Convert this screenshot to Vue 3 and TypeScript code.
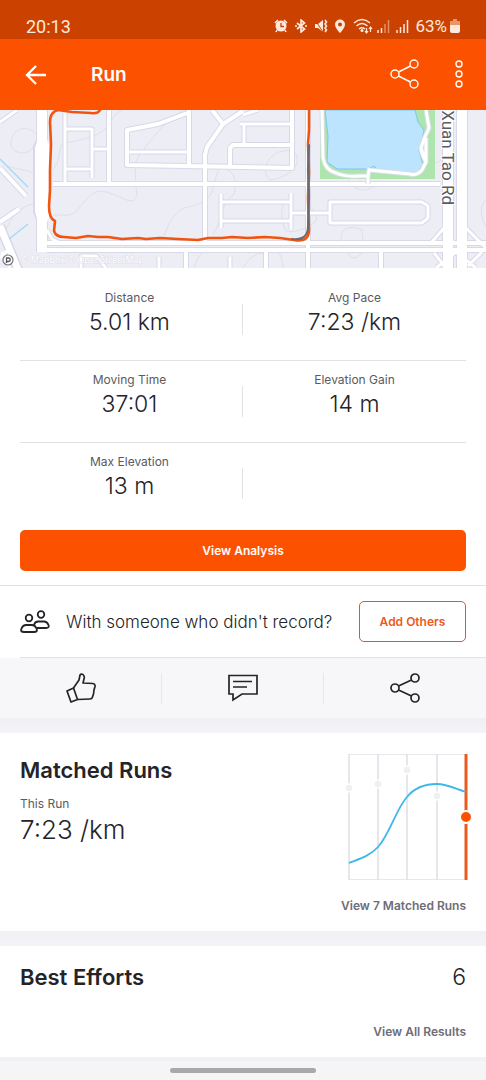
<script setup lang="ts">
interface Stat {
  label: string
  value: string
}

const statRows: Stat[][] = [
  [
    { label: 'Distance', value: '5.01 km' },
    { label: 'Avg Pace', value: '7:23 /km' },
  ],
  [
    { label: 'Moving Time', value: '37:01' },
    { label: 'Elevation Gain', value: '14 m' },
  ],
  [{ label: 'Max Elevation', value: '13 m' }],
]

// Map streets, grouped by drawn width
const minorRoads: string[] = [
  'M65 0V72', 'M65 19H92V68', 'M92 39H109', 'M65 59H92',
  'M127 42H189', 'M221 84V118', 'M221 92H290', 'M221 111H290', 'M291 83V119', 'M291 103H330',
  'M330 92H422L428 96V108L422 113H330Z',
  'M244 14V33', 'M240 14H290', 'M0 12L17 0', 'M243 5L258 0',
  'M159 147V158', 'M230 147V158', 'M81 158V146H96L106 158',
  'M430 134L444 118L454 134M436 158L456 142L476 158M434 143L446 158M466 118L486 138M468 156L482 142',
  'M47 120L52 129L62 134',
]
const streets: string[] = [
  'M109 0V74', 'M53 74H440', 'M189 0V56', 'M190 2L158 14L127 20V55L292 58V0',
  'M212 0L223 14L243 1', 'M223 14L207 37L205 45V132', 'M230 57V38L233 35H290',
  'M186 140V158', 'M266 140V158', 'M381 140V158', 'M308 0V158',
  'M0 58L26 86', 'M0 112L19 99', 'M47 133H486', 'M47 140H486',
]
const avenues: string[] = [
  'M42 0V142', 'M448 0V158', 'M462 0V158',
]
const contours: string[] = [
  'M28 19C15 16 8 30 12 38C18 46 32 44 34 34C40 28 37 22 28 19',
  'M8 56C18 60 28 59 34 64M34 94C20 96 10 108 5 122',
  'M53 59C60 53 59 38 62 34C80 30 98 27 106 18C112 10 114 4 122 0',
  'M135 54C141 40 150 32 158 22C165 12 176 6 183 0M135 54C136 65 135 76 137 84C134 96 126 89 117 86C108 82 98 78 90 86C80 94 77 107 63 105H53',
  'M163 128C168 116 172 104 184 98C200 94 207 92 212 82C214 74 216 64 220 58M228 60C236 64 236 74 234 84C220 94 222 112 213 124',
  'M284 41C268 42 260 62 270 70C286 68 300 58 297 46C294 40 288 40 284 41',
  'M288 89C278 96 282 114 286 121C296 124 310 116 315 112C320 108 312 98 306 92',
  'M345 119C336 128 344 142 353 148C368 147 362 126 362 120C356 117 350 117 345 119',
  'M343 58C346 68 354 80 362 80C370 80 376 76 379 70M486 90C478 96 482 112 486 116',
  'M243 158C250 146 258 142 264 144M278 140C282 148 283 154 283 158M194 158C196 150 200 144 204 142M427 53C436 54 438 52 442 50',
]
const route =
  'M100 0Q98 4 91 3L72 2L58 0Q50 2 50 12L51 34L50 60L50 80L49 96Q49 109 55 111L54 121Q56 127 64 127L76 128L88 126L98 127L108 127L122 129L138 128L146 129L160 128L178 129L198 130L208 128L222 128L232 127L248 128L265 127L280 128L294 130Q309 133 309 120L308 88L309 62L308 34L309 20V0'
const routeShade = 'M309 35L308 60L309 86L308 118Q307 131 292 129'

// Pace trend, in chart units
const gridXs: number[] = [0, 29, 58, 88]
const pastRuns: [number, number][] = [[0, 34], [29, 30], [58, 16], [88, 42]]
const trend = 'M0 109C10 105 21 102 29 93C41 80 47 55 58 43C66 33 77 30 88 30C98 30 107 35 117 38'
</script>

<template>
  <div class="screen">
    <div class="status">
      <span class="clock">20:13</span>
      <div class="status-icons">
        <svg class="s-icon" width="14" height="14" viewBox="0 0 14 14" aria-hidden="true">
          <circle cx="7" cy="7" r="5.5" fill="currentColor" />
          <path d="M1 4L4 1M10 1L13 4M3 11L2 13M11 11L12 13" stroke="currentColor" stroke-width="1.6" />
          <path d="M7 4V7.5H10" fill="none" stroke="#cb4200" stroke-width="1.3" />
        </svg>
        <svg class="s-icon" width="14" height="14" viewBox="0 0 14 14" aria-hidden="true">
          <path d="M3 4L10.500 10L7 13V1L10.500 4L3 10M1 7H3M11 7H13" fill="none" stroke="currentColor" stroke-width="1.7" />
        </svg>
        <svg class="s-icon" width="14" height="14" viewBox="0 0 14 14" aria-hidden="true">
          <path d="M1 5H4L9 1V13L4 9H1Z" fill="currentColor" />
          <path d="M1 1L9 13" stroke="#cb4200" stroke-width="1" />
          <path d="M11 1L12.500 3L11 5L12.500 7L11 9L12.500 11L11 13" fill="none" stroke="currentColor" stroke-width="1.600" />
        </svg>
        <svg class="s-icon" width="12" height="14" viewBox="0 0 12 14" aria-hidden="true">
          <path fill-rule="evenodd" d="M6 0.500A5 5 0 0 0 1 5.500C1 9 6 14 6 14S11 9 11 5.500A5 5 0 0 0 6 0.500M6 3.500A2 2 0 1 1 6 7.500A2 2 0 1 1 6 3.500" fill="currentColor" />
        </svg>
        <svg class="s-icon wifi" width="20" height="16" viewBox="0 0 20 16" aria-hidden="true">
          <path d="M1 5Q9 -2 17 5M3.500 8Q9 3 14.500 8M6 11Q9 8.500 12 11" fill="none" stroke="currentColor" stroke-width="1.5" />
          <circle cx="9" cy="12.500" r="1.500" fill="currentColor" />
          <path d="M13.500 10V15M12 13L13.500 15L15 13M17.500 14V9M16 11L17.500 9L19 11" fill="none" stroke="currentColor" stroke-width="1.200" />
        </svg>
        <svg class="s-icon" width="13" height="14" viewBox="0 0 13 14" aria-hidden="true">
          <path d="M1 11V14M4.500 9V14" stroke="currentColor" stroke-width="1.500" />
          <path d="M8 5V14M11.500 1V14" stroke="currentColor" stroke-width="1.500" opacity=".45" />
        </svg>
        <svg class="s-icon" width="13" height="14" viewBox="0 0 13 14" aria-hidden="true">
          <path d="M1 11V14M4.500 8V14M8 5V14M11.500 1V14" stroke="currentColor" stroke-width="1.500" />
        </svg>
        <span class="battery-text">63%</span>
        <svg class="s-icon" width="10" height="14" viewBox="0 0 10 14" aria-hidden="true">
          <path d="M3 0H7V2H10V6H0V2H3Z" fill="currentColor" opacity=".5" />
          <path d="M0 6H10V12Q10 14 8 14H2Q0 14 0 12Z" fill="currentColor" />
        </svg>
      </div>
    </div>

    <header class="appbar">
      <button class="icon-btn" type="button" aria-label="Back">
        <svg width="22" height="22" viewBox="0 0 22 22">
          <path d="M21 11H2M11 2L2 11L11 20" fill="none" stroke="currentColor" stroke-width="2.300" />
        </svg>
      </button>
      <h1 class="title">Run</h1>
      <button class="icon-btn" type="button" aria-label="Share">
        <svg width="30" height="30" viewBox="0 0 30 30" fill="none" stroke="currentColor" stroke-width="1.400">
          <circle cx="5" cy="14" r="4" /><circle cx="24" cy="4" r="4" /><circle cx="24" cy="24" r="4" />
          <path d="M8.500 12L20.500 6M8.500 16L20.500 22" />
        </svg>
      </button>
      <button class="icon-btn more" type="button" aria-label="More options">
        <svg width="8" height="30" viewBox="0 0 8 30" fill="none" stroke="currentColor" stroke-width="1.400">
          <circle cx="4" cy="4" r="3" /><circle cx="4" cy="14" r="3" /><circle cx="4" cy="24" r="3" />
        </svg>
      </button>
    </header>

    <svg class="map" viewBox="0 0 486 158" preserveAspectRatio="xMidYMid slice" role="img" aria-label="Route map">
      <rect width="486" height="158" fill="#ededf6" />
      <g fill="none" stroke="#dfdfe4" stroke-width="1">
        <path v-for="d in contours" :key="d" :d="d" />
      </g>
      <rect x="320" y="0" width="115" height="69" fill="#ade5ac" />
      <path
        d="M325 0L328 26L327 52L337 59H368L374 56L378 60L416 64L423 55L419 41L423 25L424 20L418 12L415 0Z"
        fill="#bce4ff" stroke="#79c7f1" stroke-width="1"
      />
      <g fill="none" stroke="#d8d8e8" stroke-linejoin="round">
        <path v-for="d in avenues" :key="d" :d="d" stroke-width="12" />
        <path v-for="d in streets" :key="d" :d="d" stroke-width="6" />
        <path v-for="d in minorRoads" :key="d" :d="d" stroke-width="5" />
        <path d="M0 116L19 162" stroke-width="10" />
        <path d="M38 28L34 38V102L39 114" stroke-width="2" />
      </g>
      <g fill="none" stroke="#fff" stroke-linejoin="round">
        <path d="M38 28L35 38V102L39 115H46L50 104V38L46 26Z" fill="#fff" stroke="none" />
        <path v-for="d in avenues" :key="d" :d="d" stroke-width="10" />
        <path v-for="d in streets" :key="d" :d="d" stroke-width="4" />
        <path v-for="d in minorRoads" :key="d" :d="d" stroke-width="3" />
        <path d="M0 116L19 162" stroke-width="7" />
        <path d="M2 142L10 158M0 148L10 138" stroke-width="3" />
      </g>
      <path d="M0 49L28 77M9 129L28 114" stroke="#a6d9f5" stroke-width="1.500" />
      <path d="M322 0L323 48Q325 60 336 63Q345 67 358 66H368V74M368 67L369 60L410 64Q417 66 422 60L426 52Q421 43 421 38L424 29L429 18L426 0M421 38L426 52V28" fill="none" stroke="#d6dfe2" stroke-width="5" />
      <path d="M322 0L323 48Q325 60 336 63Q345 67 358 66H368V74M368 67L369 60L410 64Q417 66 422 60L426 52Q421 43 421 38L424 29L429 18L426 0M421 38L426 52V28" fill="none" stroke="#fff" stroke-width="3" />
      <g fill="none" stroke-linecap="round" stroke-linejoin="round">
        <path :d="route" stroke="#f25410" stroke-width="2.600" />
        <path :d="routeShade" stroke="#72686a" stroke-width="2.200" />
      </g>
      <text class="road-name" transform="translate(442 95) rotate(90)" text-anchor="end">Xuan Tao Rd</text>
      <circle cx="8" cy="150" r="5" fill="#fff" stroke="#77777d" stroke-width="1.200" />
      <path d="M6.500 153V148H8.500A1.500 1.500 0 0 1 8.500 151.500H6.500" fill="none" stroke="#55555a" stroke-width="1.300" />
      <text class="attribution" x="21" y="153">© Mapbox © OpenStreetMap</text>
    </svg>

    <section class="stats">
      <div v-for="(row, i) in statRows" :key="i" class="stat-row">
        <div v-for="s in row" :key="s.label" class="stat">
          <span class="label">{{ s.label }}</span>
          <span class="value">{{ s.value }}</span>
        </div>
      </div>
    </section>

    <div class="analysis">
      <button class="btn primary" type="button">View Analysis</button>
    </div>

    <section class="companions">
      <svg width="30" height="24" viewBox="0 0 30 24" fill="none" stroke="#242428" stroke-width="1.800" aria-hidden="true">
        <circle cx="9" cy="8" r="3.300" /><circle cx="21" cy="4.500" r="3.300" />
        <path d="M4 22H14Q18 22 16.500 18.500Q15 15 12 15H6Q3 15 1.500 18.500Q0 22 4 22Z" />
        <path d="M14 15Q15 11.500 18 11.500H24Q27 11.500 28.500 15Q29.500 18 26 18H17" />
      </svg>
      <p class="question">With someone who didn't record?</p>
      <button class="btn outline" type="button">Add Others</button>
    </section>

    <div class="social">
      <button type="button" aria-label="Give kudos">
        <svg width="30" height="30" viewBox="0 0 30 30" fill="none" stroke="currentColor" stroke-width="1.700" stroke-linejoin="round">
          <path d="M1 18L7.500 15L11.500 26.500L5 29Z" />
          <path d="M7.500 15L13 7L14 2Q15 0.500 17 1.500Q19 3.500 18 6L17 10L27 10.500Q29.500 11 29 13.500L28 17L27.500 21L26.500 24Q26 26 24 26L11.500 26.500" />
        </svg>
      </button>
      <button type="button" aria-label="Comment">
        <svg width="30" height="28" viewBox="0 0 30 28" fill="none" stroke="currentColor" stroke-width="1.700">
          <path d="M1 1.500H29V20H14L5 26V20H1Z" /><path d="M5 7.500H24M5 13H19" />
        </svg>
      </button>
      <button type="button" aria-label="Share activity">
        <svg width="30" height="30" viewBox="0 0 30 30" fill="none" stroke="currentColor" stroke-width="1.700">
          <circle cx="5" cy="15" r="4" /><circle cx="25" cy="5" r="4" /><circle cx="25" cy="25" r="4" />
          <path d="M8.500 13L21.500 7M8.500 17L21.500 23" />
        </svg>
      </button>
    </div>

    <section class="matched">
      <div class="matched-top">
        <div class="matched-info">
          <h2>Matched Runs</h2>
          <span class="label">This Run</span>
          <span class="value large">7:23 /km</span>
        </div>
        <svg class="chart" width="117" height="126" viewBox="0 0 117 126" fill="none" role="img" aria-label="Pace trend of matched runs">
          <path d="M0 0.500H117M0 125.500H117" stroke="#e8e8ec" />
          <path v-for="x in gridXs" :key="x" :d="`M${x} 0V126`" stroke="#dedee5" stroke-width="1.500" />
          <circle v-for="[x, y] in pastRuns" :key="x" :cx="x" :cy="y" r="4" fill="#efeff4" stroke="#fff" stroke-width="1.500" />
          <path d="M117 0V126" stroke="#ec5a1c" stroke-width="3" />
          <path :d="trend" stroke="#3db8e8" stroke-width="1.800" />
          <circle cx="117" cy="63" r="6" fill="#fc5200" stroke="#fff" stroke-width="2" />
        </svg>
      </div>
      <a class="more-link" href="#">View 7 Matched Runs</a>
    </section>

    <section class="efforts">
      <div class="efforts-top">
        <h2>Best Efforts</h2>
        <span class="value">6</span>
      </div>
      <a class="more-link" href="#">View All Results</a>
    </section>

    <div class="navbar"><span class="pill"></span></div>
  </div>
</template>

<style>
body {
  background: #f0f0f5;
}
</style>

<style scoped>
.screen {
  font-family: Inter, "Liberation Sans", sans-serif;
  color: #242428;
  background: #fff;
}
button {
  font: inherit;
  color: inherit;
  background: none;
  border: 0;
  padding: 0;
  cursor: pointer;
}
svg {
  display: block;
  flex: none;
}
h1, h2, p {
  margin: 0;
}
.status {
  display: flex;
  justify-content: space-between;
  align-items: center;
  box-sizing: border-box;
  height: 39px;
  padding: 13px 26px 0;
  background: #cb4200;
  color: #ffe9dd;
  font-family: Roboto, sans-serif;
}
.clock {
  font-size: 18px;
}
.status-icons {
  display: flex;
  align-items: center;
  gap: 6px;
}
.s-icon.wifi {
  margin: 0 -2px 0 1px;
}
.battery-text {
  font-size: 17px;
  margin-right: -3px;
}
.appbar {
  display: flex;
  align-items: center;
  height: 71px;
  padding: 0 23px 0 25px;
  background: #fc5200;
  color: #fff;
}
.icon-btn {
  display: flex;
}
.icon-btn svg {
  overflow: visible;
}
.title {
  flex: 1;
  margin-left: 44px;
  font-size: 19px;
  font-weight: 600;
}
.more {
  margin-left: 35px;
}
.map {
  width: 100%;
  height: 158px;
}
.road-name {
  font: 17px Roboto, sans-serif;
  fill: #5c5c62;
  stroke: #fff;
  stroke-width: 2px;
  paint-order: stroke;
}
.attribution {
  font: 9px "Open Sans", sans-serif;
  fill: #fff;
  stroke: #dedee8;
  stroke-width: 1px;
  paint-order: stroke;
}
.stats {
  padding: 11px 20px 0;
}
.stat-row {
  position: relative;
  display: grid;
  grid-template-columns: 1fr 1fr;
  height: 81px;
  border-bottom: 1px solid #e2e2e5;
}
.stat-row:last-child {
  border-bottom: 0;
}
.stat-row::before {
  content: "";
  position: absolute;
  right: 50%;
  top: 25px;
  height: 31px;
  border-left: 1px solid #e2e2e5;
}
.stat {
  display: flex;
  flex-direction: column;
  align-items: center;
  padding-top: 11px;
}
.stat:first-child {
  padding-right: 4px;
}
.label {
  font-size: 12px;
  line-height: 16px;
  color: #5a5a60;
}
.value {
  font-size: 23px;
  line-height: 32px;
  font-weight: 300;
}
.value.large {
  font-size: 26px;
}
.analysis {
  padding: 6px 20px 14px;
  border-bottom: 1px solid #e2e2e5;
}
.btn {
  height: 41px;
  border-radius: 5px;
  font-size: 12px;
  font-weight: 600;
}
.primary {
  display: block;
  width: 100%;
  background: #fc5200;
  color: #fff;
}
.companions {
  display: flex;
  align-items: center;
  height: 71px;
  margin-left: 20px;
  padding-right: 20px;
  border-bottom: 1px solid #e2e2e5;
}
.question {
  flex: 1;
  margin-left: 16px;
  font-size: 17px;
  font-weight: 300;
  white-space: nowrap;
}
.outline {
  width: 107px;
  border: 1px solid #fc5200;
  color: #ec5a1c;
}
.social {
  display: grid;
  grid-template-columns: 1fr 1fr 1fr;
  height: 60px;
  align-items: center;
  background: #f7f7fa;
}
.social button {
  display: flex;
  justify-content: center;
  align-items: center;
  height: 31px;
  border-right: 1px solid #e6e6eb;
}
.social button:last-child {
  border-right-color: transparent;
}
.matched,
.efforts {
  display: flex;
  flex-direction: column;
  box-sizing: border-box;
  padding: 15px 20px 0;
  background: linear-gradient(#efeff4, #f4f4f8) top / 100% 15px no-repeat;
}
.matched {
  min-height: 213px;
}
.matched-top {
  display: flex;
  justify-content: space-between;
  padding-top: 21px;
}
.matched-info {
  display: flex;
  flex-direction: column;
}
h2 {
  font-size: 22px;
  line-height: 32px;
  font-weight: 600;
}
.matched-info .label {
  margin: 10px 0 2px;
}
.chart {
  overflow: visible;
}
.more-link {
  align-self: flex-end;
  font-size: 12px;
  line-height: 16px;
  font-weight: 600;
  color: #6d6d78;
  text-decoration: none;
}
.matched .more-link {
  margin-top: 18px;
}
.efforts {
  min-height: 126px;
}
.efforts-top {
  display: flex;
  justify-content: space-between;
  padding: 15px 0 31px;
}
.navbar {
  display: flex;
  justify-content: center;
  align-items: center;
  height: 19px;
  border-top: 4px solid #f0f0f5;
  background: #f5f5f5;
}
.pill {
  width: 30%;
  height: 5px;
  border-radius: 3px;
  background: #a9a9a9;
}
</style>
